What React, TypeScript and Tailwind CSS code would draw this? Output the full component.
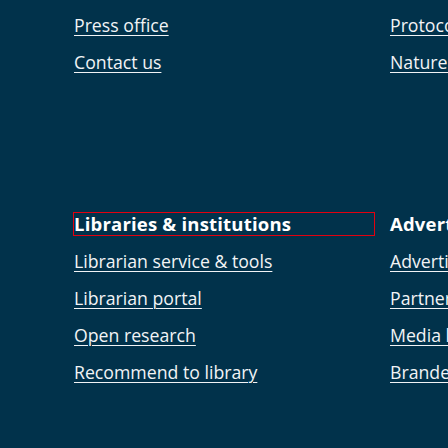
import React from 'react';

const topLeft = ['Press office', 'Contact us'];
const topRight = ['Protocols', 'Nature Index'];

const sections = [
  {
    title: 'Libraries & institutions',
    focused: true,
    links: ['Librarian service & tools', 'Librarian portal', 'Open research', 'Recommend to library'],
  },
  {
    title: 'Advertising & partnerships',
    focused: false,
    links: ['Advertising', 'Partnerships & Services', 'Media kits', 'Branded content'],
  },
];

const LinkItem: React.FC<{ label: string }> = ({ label }) => (
  <li className="leading-[22px]">
    <a href="#" className="underline underline-offset-[3px] decoration-1 text-[#f2f4f6] whitespace-nowrap">
      {label}
    </a>
  </li>
);

export default function App() {
  return (
    <div
      className="w-[448px] h-[448px] overflow-hidden bg-[#01324b] text-white text-[17.7px]"
      style={{ fontFamily: '"Segoe UI", "Open Sans", "Noto Sans", sans-serif' }}
    >
      <div className="pl-[74px] pt-[14px] flex gap-4">
        <ul className="w-[300px] shrink-0 flex flex-col gap-[15px]">
          {topLeft.map(l => <LinkItem key={l} label={l} />)}
        </ul>
        <ul className="w-[300px] shrink-0 flex flex-col gap-[15px]">
          {topRight.map(l => <LinkItem key={l} label={l} />)}
        </ul>
      </div>

      <div className="pl-[74px] mt-[140px] flex gap-4">
        {sections.map(s => (
          <div key={s.title} className="w-[300px] shrink-0 flex flex-col gap-[15px]">
            <h3 className={`font-bold text-[18.5px] tracking-[0.2px] leading-[22px] whitespace-nowrap ${s.focused ? 'outline outline-1 outline-[#e3000f]' : ''}`}>
              {s.title}
            </h3>
            <ul className="flex flex-col gap-[15px]">
              {s.links.map(l => <LinkItem key={l} label={l} />)}
            </ul>
          </div>
        ))}
      </div>
    </div>
  );
}
